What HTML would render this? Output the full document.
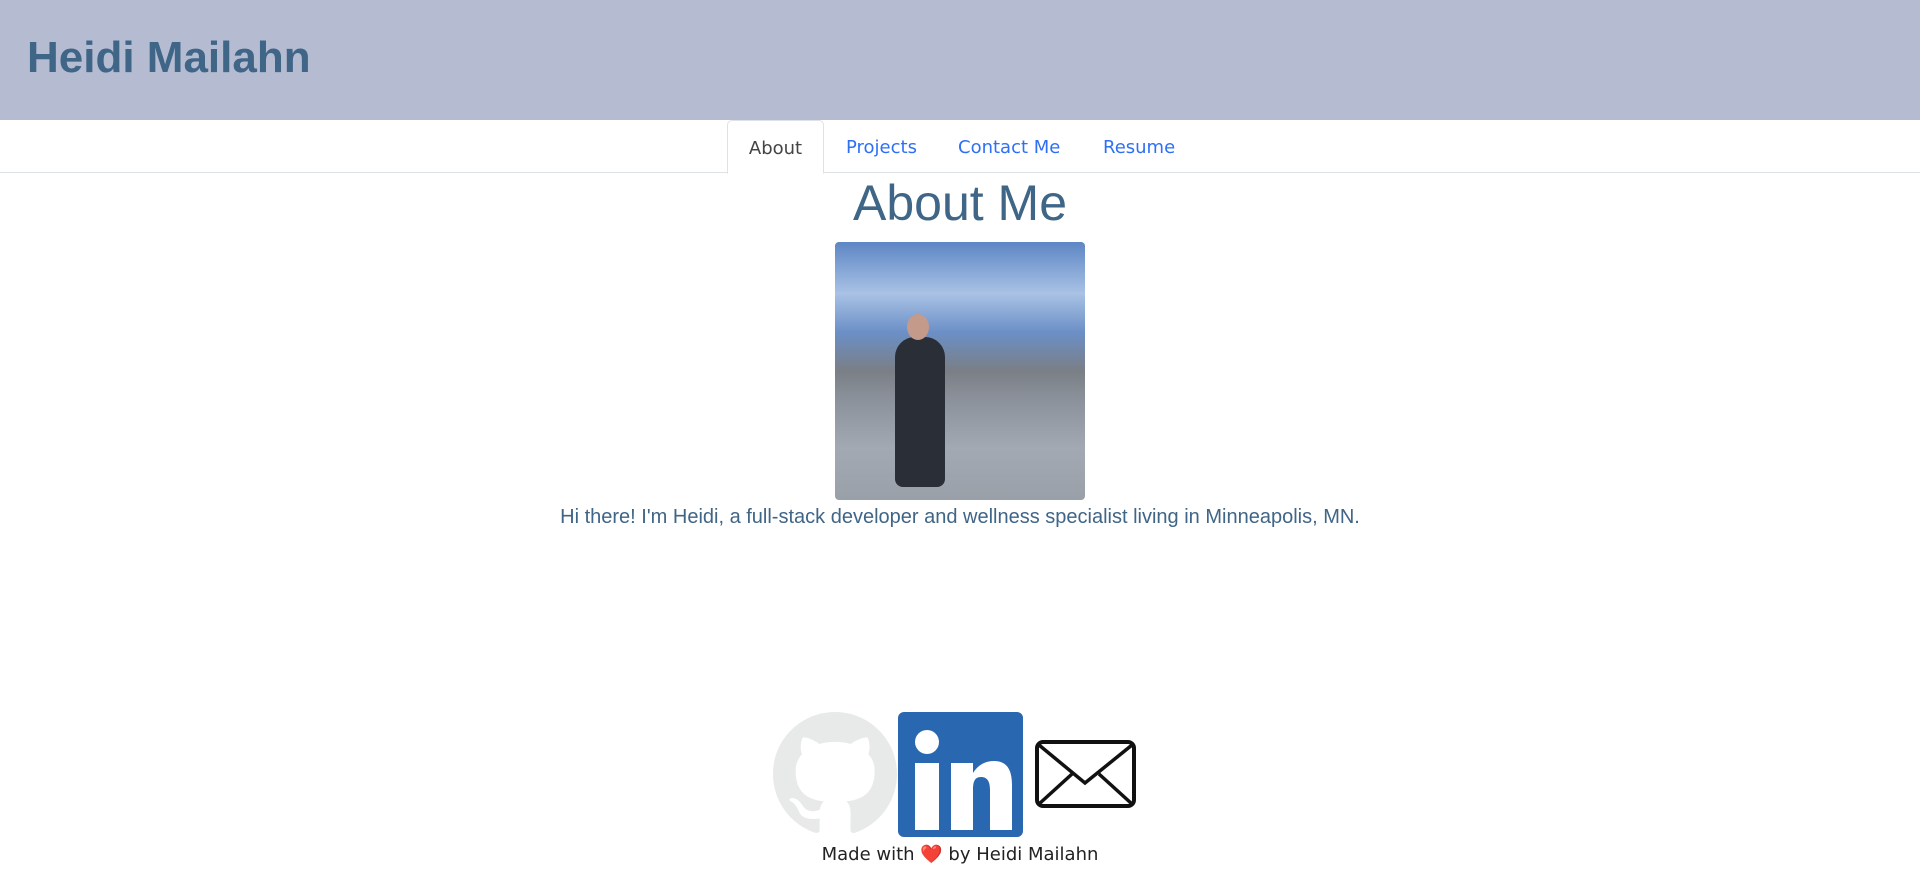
<!DOCTYPE html>
<html><head><style>
body{margin:0;width:1920px;height:892px;font-family:"Liberation Sans",sans-serif;background:#fff;overflow:hidden;position:relative}
header{height:120px;background:#b5bbd1}
header h1{margin:0;position:absolute;left:27px;top:33px;font-size:44px;color:#3f6587;font-weight:bold}
nav{position:absolute;top:120px;left:0;width:1920px;height:52px;border-bottom:1px solid #dee2e6}
.tab{position:absolute;top:2px;height:52px;line-height:52px;font-size:18px;font-family:"DejaVu Sans","Liberation Sans",sans-serif;color:#2f6ff6}
.active{top:0;left:727px;width:95px;border:1px solid #dee2e6;border-bottom:1px solid #fff;border-radius:5px 5px 0 0;color:#444;text-align:center;height:52px;line-height:56px;background:#fff}
h2{position:absolute;top:174px;left:0;width:1920px;text-align:center;margin:0;font-size:50px;font-weight:normal;color:#3f6587}
.photo{position:absolute;left:835px;top:242px;width:250px;height:258px;border-radius:4px;background:linear-gradient(180deg,#5d86c5 0%,#a9c2e5 20%,#6b8fc6 35%,#7a7f86 50%,#8a9099 60%,#a2a9b3 80%,#9aa0a8 100%);overflow:hidden}
p{position:absolute;top:506px;left:0;width:1920px;text-align:center;font-size:20px;color:#3f6587;margin:0}
.foot{position:absolute;top:844px;left:0;width:1920px;text-align:center;font-size:18px;color:#222;font-family:"DejaVu Sans",sans-serif}
</style></head><body>
<header><h1>Heidi Mailahn</h1></header>
<nav>
<div class="tab active">About</div>
<div class="tab" style="left:846px">Projects</div>
<div class="tab" style="left:958px">Contact Me</div>
<div class="tab" style="left:1103px">Resume</div>
</nav>
<h2>About Me</h2>
<div class="photo">
<div style="position:absolute;left:60px;top:95px;width:50px;height:150px;background:#2a2e36;border-radius:20px 20px 8px 8px"></div>
<div style="position:absolute;left:72px;top:72px;width:22px;height:26px;background:#c49a8a;border-radius:50%"></div>
</div>
<p>Hi there! I'm Heidi, a full-stack developer and wellness specialist living in Minneapolis, MN.</p>
<svg style="position:absolute;left:773px;top:712px" width="124" height="124" viewBox="0 0 16 16"><path fill="#e8e9e9" d="M8 0C3.580 0 0 3.58 0 8c0 3.54 2.29 6.53 5.470 7.590.4.07.55-.17.55-.38 0-.19-.01-.82-.01-1.49-2.01.37-2.53-.49-2.69-.94-.09-.23-.48-.94-.82-1.13-.28-.15-.68-.52-.01-.53.63-.01 1.08.58 1.23.82.72 1.21 1.87.87 2.33.66.07-.52.28-.87.51-1.07-1.78-.2-3.64-.89-3.64-3.95 0-.87.31-1.59.82-2.15-.08-.2-.36-1.02.08-2.12 0 0 .67-.21 2.2.82.64-.18 1.32-.27 2-.27.68 0 1.36.09 2 .27 1.53-1.04 2.2-.82 2.2-.82.44 1.1.16 1.92.08 2.12.51.56.82 1.27.82 2.150 0 3.07-1.87 3.75-3.65 3.95.29.25.54.73.54 1.480 0 1.07-.01 1.93-.01 2.2 0 .21.15.46.55.38A8.013 8.013 0 0016 8c0-4.42-3.58-8-8-8z"/></svg>
<svg style="position:absolute;left:898px;top:712px" width="125" height="125" viewBox="0 0 125 125"><rect width="125" height="125" rx="6" fill="#2a67b1"/><circle cx="29" cy="30" r="12" fill="#fff"/><rect x="17" y="51" width="24" height="67" fill="#fff"/><path fill="#fff" d="M53 51h22v10c5-8 12-12 21-12 13 0 18 9 18 24v45H92V78c0-9-3-13-9-13-7 0-8 6-8 13v40H53z"/></svg>
<svg style="position:absolute;left:1035px;top:740px" width="101" height="69" viewBox="0 0 101 69"><rect x="2" y="2" width="97" height="64" rx="6" fill="none" stroke="#111" stroke-width="4"/><path d="M4 5l46 38L97 5M4 64l33-30M97 64L64 34" fill="none" stroke="#111" stroke-width="3.5"/></svg>
<div class="foot">Made with <span style="color:#e33">❤️</span> by Heidi Mailahn</div>
</body></html>
